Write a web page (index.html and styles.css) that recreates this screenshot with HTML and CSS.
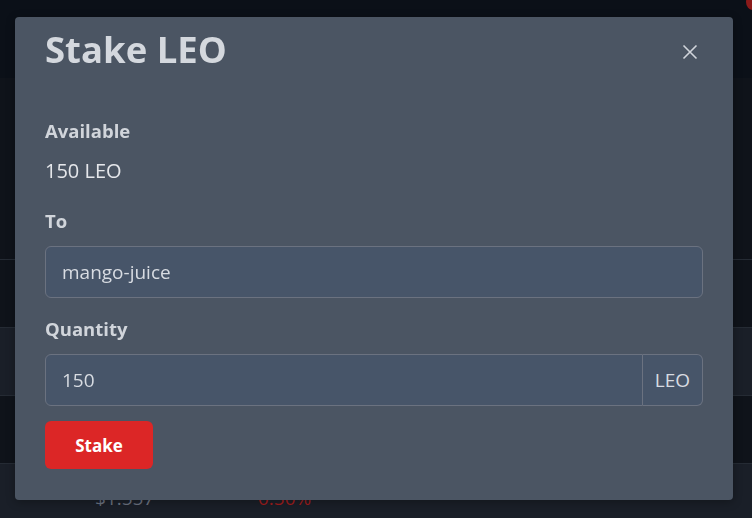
FILE: index.html
```html
<!DOCTYPE html>
<html lang="en">
<head>
<meta charset="utf-8">
<title>Stake LEO</title>
<link rel="stylesheet" href="styles.css">
</head>
<body>
<div class="page">
  <header class="topbar"><span class="avatar"></span></header>
  <section class="hero"></section>
  <div class="row row-dark"></div>
  <div class="row row-light"></div>
  <div class="row row-dark"></div>
  <div class="row row-light">
    <span class="cell price">$1.557</span>
    <span class="cell change">0.50%</span>
  </div>
</div>

<div class="modal" role="dialog" aria-labelledby="modal-title">
  <div class="modal-header">
    <h1 id="modal-title" class="modal-title">Stake LEO</h1>
    <button class="close" aria-label="Close">
      <svg width="16" height="16" viewBox="0 0 16 16" aria-hidden="true">
        <path d="M1.5 1.5 L14.5 14.5 M14.5 1.5 L1.5 14.5" stroke="#d1d5db" stroke-width="1.6" fill="none"/>
      </svg>
    </button>
  </div>
  <div class="modal-body">
    <div class="group group-available">
      <div class="label">Available</div>
      <div class="value">150 LEO</div>
    </div>
    <div class="group">
      <label class="label" for="to">To</label>
      <input id="to" class="input" type="text" value="mango-juice">
    </div>
    <div class="group group-last">
      <label class="label" for="qty">Quantity</label>
      <div class="input-group">
        <input id="qty" class="input input-joined" type="text" value="150">
        <span class="addon">LEO</span>
      </div>
    </div>
    <button class="btn-stake">Stake</button>
  </div>
</div>
</body>
</html>
```

FILE: styles.css
```css
* { box-sizing: border-box; }

html, body {
  margin: 0;
  padding: 0;
  height: 100%;
  overflow: hidden;
}

body {
  background: #181d26;
  font-family: "Open Sans", "Noto Sans", sans-serif;
}

.page {
  display: flex;
  flex-direction: column;
}

.topbar {
  position: relative;
  height: 78px;
  background: #0b1018;
}

.avatar {
  position: absolute;
  right: -8px;
  top: -6px;
  width: 14px;
  height: 16px;
  border-radius: 50%;
  background: #8b1a1a;
}

.hero {
  height: 181px;
  background: #0f131a;
}

.row {
  height: 68px;
  border-top: 1px solid #252b34;
  display: flex;
  align-items: center;
  font-size: 19px;
}

.row-dark { background: #0f131a; }
.row-light { background: #1a1f28; }

.cell.price {
  margin-left: 95px;
  width: 163px;
  color: #6b7280;
}

.cell.change {
  color: #a11d1d;
}

.modal {
  position: fixed;
  left: 15px;
  top: 17px;
  width: 718px;
  background: #4b5563;
  border-radius: 4px;
  padding: 10px 30px 31px;
  color: #d1d5db;
  box-shadow: 0 2px 10px rgba(0, 0, 0, 0.3);
}

.modal-header {
  display: flex;
  align-items: center;
  justify-content: space-between;
}

.modal-title {
  margin: 0;
  font-size: 36.5px;
  line-height: 45px;
  font-weight: 700;
  color: #d4d8de;
}

.close {
  background: none;
  border: 0;
  padding: 0;
  margin: 4px 5px 0 0;
  width: 16px;
  height: 16px;
  display: flex;
  cursor: pointer;
}

.modal-body {
  padding-top: 45px;
  display: flex;
  flex-direction: column;
  align-items: flex-start;
}

.group {
  width: 100%;
  margin-bottom: 17px;
}

.group-available {
  margin-bottom: 23px;
}

.group-last {
  margin-bottom: 15px;
}

.label {
  display: block;
  font-size: 18.5px;
  line-height: 27px;
  font-weight: 700;
  color: #d1d5db;
  margin-bottom: 12px;
}

.group-available .label {
  margin-bottom: 13px;
}

.value {
  font-size: 20px;
  line-height: 27px;
  color: #e5e7eb;
}

.input {
  display: block;
  width: 100%;
  height: 52px;
  padding: 0 16px;
  background: #475569;
  border: 1px solid #6b7280;
  border-radius: 6px;
  color: #d8dce2;
  font-family: inherit;
  font-size: 19px;
  outline: none;
}

.input-group {
  display: flex;
  width: 100%;
}

.input-joined {
  flex: 1;
  border-top-right-radius: 0;
  border-bottom-right-radius: 0;
}

.addon {
  width: 60px;
  height: 52px;
  display: flex;
  align-items: center;
  justify-content: center;
  background: #475569;
  border: 1px solid #6b7280;
  border-left: 0;
  border-radius: 0 6px 6px 0;
  font-size: 19px;
  color: #d8dce2;
}

.btn-stake {
  width: 108px;
  height: 48px;
  background: #dc2626;
  color: #ffffff;
  border: 0;
  border-radius: 6px;
  font-family: inherit;
  font-size: 17px;
  font-weight: 700;
  cursor: pointer;
}
```
